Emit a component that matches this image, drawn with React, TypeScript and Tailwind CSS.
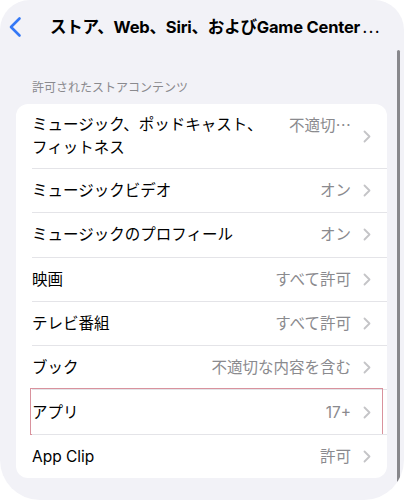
import { Fragment } from "react";

interface Row {
  label: string;
  value: string;
  highlight?: boolean;
}

const rows: Row[] = [
  { label: "ミュージックビデオ", value: "オン" },
  { label: "ミュージックのプロフィール", value: "オン" },
  { label: "映画", value: "すべて許可" },
  { label: "テレビ番組", value: "すべて許可" },
  { label: "ブック", value: "不適切な内容を含む" },
  { label: "アプリ", value: "17+", highlight: true },
  { label: "App Clip", value: "許可" },
];

const cjk = { fontFamily: "'Noto Sans CJK JP', sans-serif" };

function Chevron() {
  return (
    <svg width="8" height="13" viewBox="0 0 8 13" className="shrink-0">
      <path
        d="M1.5 1.5 L6.5 6.5 L1.5 11.5"
        fill="none"
        stroke="#c4c4c7"
        strokeWidth="1.8"
        strokeLinecap="round"
        strokeLinejoin="round"
      />
    </svg>
  );
}

export default function App() {
  return (
    <div className="min-h-screen bg-white">
      <div
        className="relative h-[500px] w-[404px] overflow-hidden rounded-t-[30px] rounded-b-[40px] bg-[#f2f2f7] text-black"
        style={{ fontFamily: "Inter, 'Noto Sans CJK JP', sans-serif" }}
      >
        {/* Nav bar */}
        <div className="flex h-[54px] items-center pl-2">
          <svg width="14" height="22" viewBox="0 0 14 22" className="shrink-0">
            <path
              d="M11.5 2.5 L3 11 L11.5 19.5"
              fill="none"
              stroke="#3478f6"
              strokeWidth="2.6"
              strokeLinecap="round"
              strokeLinejoin="round"
            />
          </svg>
          <h1 className="ml-[28px] whitespace-nowrap text-[16.5px] font-bold tracking-[-0.2px]">
            ストア、Web、Siri、およびGame Center
            <span className="ml-[2px] font-normal" style={cjk}>
              ⋯
            </span>
          </h1>
        </div>

        {/* Section header */}
        <p className="mt-[26px] mb-2 px-8 text-[12px] leading-4 text-[#8a8a8e]">
          許可されたストアコンテンツ
        </p>

        {/* Card */}
        <div className="mx-4 w-[371px] rounded-[12px] bg-white">
          <div className="flex items-center py-[9px] pl-4 pr-4">
            <div className="flex min-w-0 flex-1 items-start">
              <span className="w-[241px] text-[15.5px] leading-[23px]">
                ミュージック、ポッドキャスト、フィットネス
              </span>
              <span className="ml-auto whitespace-nowrap text-[15.5px] leading-[23px] text-[#8a8a8e]">
                不適切<span style={cjk}>…</span>
              </span>
            </div>
            <div className="ml-3">
              <Chevron />
            </div>
          </div>

          {rows.map((row) => (
            <Fragment key={row.label}>
              <div className="relative pl-4">
                <div className="flex h-[44.3px] items-center border-t border-[#e4e4e8] pr-4">
                  <span className="text-[15.5px]">{row.label}</span>
                  <span className="ml-auto whitespace-nowrap text-[15.5px] text-[#8a8a8e]">
                    {row.value}
                  </span>
                  <div className="ml-3">
                    <Chevron />
                  </div>
                </div>
                {row.highlight && (
                  <div className="pointer-events-none absolute top-[-1px] bottom-[-1px] left-[14px] right-[4px] border-[1.5px] border-[#d9929d]" />
                )}
              </div>
            </Fragment>
          ))}
        </div>

        {/* Scroll indicator */}
        <div className="absolute top-[50px] right-[4px] h-[432px] w-[3px] rounded-full bg-[#88888c]" />
      </div>
    </div>
  );
}
